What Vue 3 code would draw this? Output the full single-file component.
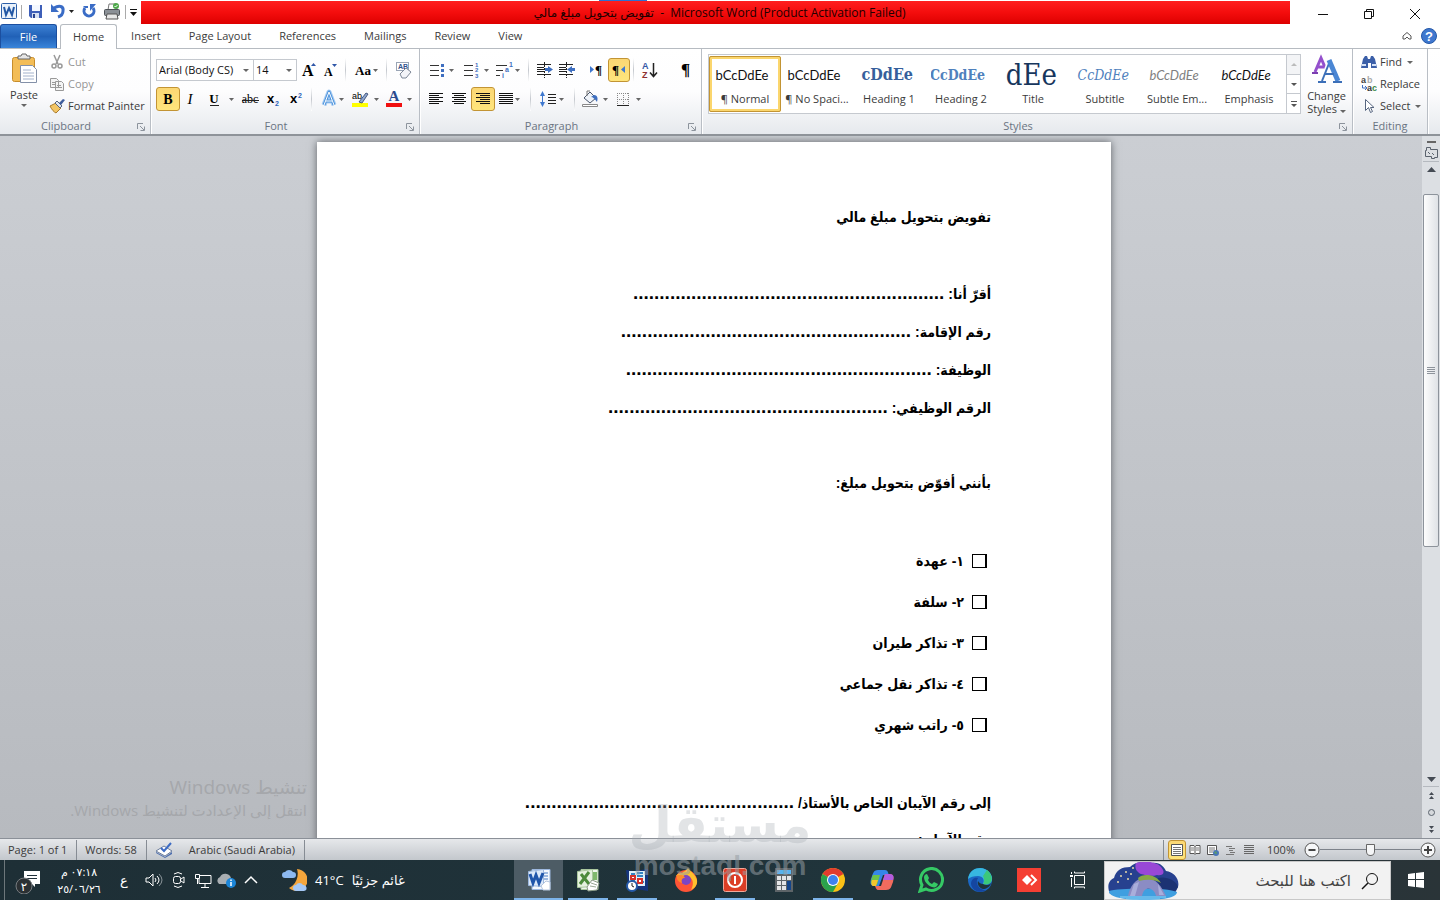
<template>
  <div class="app">
    <!-- Title bar -->
    <header class="titlebar">
      <div class="quick">
        <svg width="20" height="24" viewBox="0 0 20 24">
          <rect x="1.5" y="3.5" width="15" height="15" rx="1" fill="#eaf2fb" stroke="#2c5fa8" />
          <path d="M4 7l2 8 3-7 3 7 2-8" fill="none" stroke="#2358a5" stroke-width="2" />
        </svg>
        <i class="bar"></i>
        <button aria-label="Save">
          <svg width="24" height="24" viewBox="0 0 24 24">
            <path d="M6 5h13v13H8l-2-2z" fill="#3e5fb8" />
            <path d="M9 5h8v6H9z" fill="#f4f8ff" />
            <path d="M9 13h7v5H9z" fill="#d5dff2" />
            <path d="M10 14h2v4h-2z" fill="#27408c" />
          </svg>
        </button>
        <button aria-label="Undo">
          <svg width="30" height="24" viewBox="0 0 30 24">
            <path d="M7 8c5-3 10-2 9 3 0 3-2 5-5 6" fill="none" stroke="#3a6cc6" stroke-width="3" />
            <path d="M4 4v8h8z" fill="#3a6cc6" />
            <path d="M22 10h5l-2.5 3z" fill="#222" />
          </svg>
        </button>
        <button aria-label="Redo">
          <svg width="24" height="24" viewBox="0 0 24 24">
            <path d="M8 8a5 5 0 1 0 8 0" fill="none" stroke="#3a6cc6" stroke-width="3" />
            <path d="M13 4h6l-6 7z" fill="#3a6cc6" />
            <path d="M6 6h5v2H8z" fill="#3a6cc6" />
          </svg>
        </button>
        <button aria-label="Quick print">
          <svg width="23" height="24" viewBox="0 0 23 24">
            <path d="M7 10l1-6h7l1 6z" fill="#fff" stroke="#777" />
            <rect x="3.5" y="9.5" width="15" height="6" rx="1" fill="#8b9096" stroke="#4d5257" />
            <path d="M6 14h10l1 5H5z" fill="#e8e8e8" stroke="#555" />
            <circle cx="15" cy="6" r="3" fill="#4ea84a" />
            <path d="M13.5 6l1 1 2-2" stroke="#fff" fill="none" />
          </svg>
        </button>
        <i class="bar"></i>
        <button aria-label="Customize">
          <svg width="13" height="24" viewBox="0 0 13 24"><path d="M3 9h7v1H3zM3 12h7l-3.500 4z" fill="#111" /></svg>
        </button>
      </div>
      <div class="caption">تفويض بتحويل مبلغ مالي&nbsp; -&nbsp; Microsoft Word (Product Activation Failed)</div>
      <div class="window-buttons">
        <button aria-label="Minimize"><svg width="12" height="12" viewBox="0 0 12 12"><path d="M1 6.500h10" stroke="#111" /></svg></button>
        <button aria-label="Restore">
          <svg width="12" height="12" viewBox="0 0 12 12" fill="none" stroke="#111"><path d="M1.500 3.500h7v7h-7zM3.500 3.500v-2h7v7h-2" /></svg>
        </button>
        <button aria-label="Close"><svg width="12" height="12" viewBox="0 0 12 12"><path d="M1 1l10 10M11 1L1 11" stroke="#111" /></svg></button>
      </div>
    </header>

    <!-- Tabs -->
    <nav class="tabs">
      <button class="file">File</button>
      <button v-for="tab in tabs" :key="tab" class="tab" :class="{ active: tab === activeTab }" @click="activeTab = tab">{{ tab }}</button>
      <div class="tabs-end">
        <button aria-label="Minimize the ribbon">
          <svg width="12" height="16" viewBox="0 0 12 16"><path d="M2 8l4-3.500L10 8v3H8L6 9l-2 2H2z" fill="#fff" stroke="#555" /></svg>
        </button>
        <button aria-label="Help">
          <svg width="18" height="18" viewBox="0 0 18 18">
            <circle cx="9" cy="9" r="7.500" fill="#3f78cf" stroke="#2458a8" />
            <text x="9" y="14" text-anchor="middle" class="sans-bold" font-size="13" fill="#fff">?</text>
          </svg>
        </button>
      </div>
    </nav>

    <!-- Ribbon -->
    <section class="ribbon">
      <div class="group clipboard">
        <div class="group-body">
          <button class="paste">
            <svg width="32" height="32" viewBox="0 0 32 32">
              <rect x="4.500" y="4.500" width="22" height="24" rx="2" fill="#f3bd57" stroke="#c78d2c" />
              <path d="M10 6V3h3l1-2h4l1 2h3v3z" fill="#e6e6e6" stroke="#666" />
              <path d="M12.500 12.500h12l4 4v13h-16z" fill="#fff" stroke="#8390a8" />
              <path d="M15 17h8M15 20h11M15 23h11M15 26h11" stroke="#a3b2cc" />
            </svg>
            <span>Paste</span>
            <i class="caret"></i>
          </button>
          <div class="stack">
            <button class="line dim">
              <svg width="16" height="16" viewBox="0 0 16 16" fill="none" stroke="#999" stroke-width="1.500">
                <path d="M5 1l4 9M11 1L7 10" /><circle cx="5" cy="12" r="2" /><circle cx="11" cy="12" r="2" />
              </svg>
              Cut
            </button>
            <button class="line dim">
              <svg width="16" height="16" viewBox="0 0 16 16" fill="#f4f4f4" stroke="#999">
                <path d="M1.500 2.500h6l2 2v7h-8zM6.500 5.500h6l2 2v7h-8z" /><path d="M8 9.500h4M8 11.500h5M3 6.500h3M3 8.500h3" />
              </svg>
              Copy
            </button>
            <button class="line">
              <svg width="16" height="16" viewBox="0 0 16 16">
                <path d="M1 8l6-3 5 5-5 5c-2-1-4-3-6-7z" fill="#f2c565" stroke="#a97a2a" />
                <path d="M6 5l2-2 5 5-2 2z" fill="#dfe6f0" stroke="#56657f" />
                <path d="M10 5l4-4 2 1-4 5z" fill="#3e5d9c" />
              </svg>
              Format Painter
            </button>
          </div>
        </div>
        <div class="group-label"><span>Clipboard</span><Launcher /></div>
      </div>

      <div class="group font">
        <div class="group-body rows">
          <div class="row">
            <div class="combo family">
              <select aria-label="Font"><option>Arial (Body CS)</option></select><i class="caret"></i>
            </div>
            <div class="combo size">
              <select aria-label="Font size"><option>14</option></select><i class="caret"></i>
            </div>
            <button aria-label="Grow font">
              <svg width="24" height="24" viewBox="0 0 24 24">
                <text x="5" y="18" class="serif" font-size="16">A</text><path d="M14 8l2.500-3L19 8z" fill="#2f57a8" />
              </svg>
            </button>
            <button aria-label="Shrink font">
              <svg width="21" height="24" viewBox="0 0 21 24">
                <text x="3" y="18" class="serif" font-size="12">A</text><path d="M11 6h5l-2.500 3z" fill="#2f57a8" />
              </svg>
            </button>
            <i class="sep"></i>
            <button aria-label="Change case">
              <svg width="33" height="24" viewBox="0 0 33 24"><text x="5" y="17" class="serif" font-size="13">Aa</text><path d="M23 11h5l-2.500 3z" fill="#666" /></svg>
            </button>
            <i class="sep"></i>
            <button aria-label="Clear formatting">
              <svg width="25" height="24" viewBox="0 0 25 24">
                <rect x="5.500" y="4.500" width="12" height="8" fill="#fff" stroke="#9aa5b5" />
                <text x="7" y="11" class="sans-bold" font-size="7" fill="#33518c">AB</text>
                <path d="M9 16l6-6 5 4-5 6h-4z" fill="#f3f4f8" stroke="#7d8797" />
              </svg>
            </button>
          </div>
          <div class="row">
            <button class="on" aria-label="Bold"><svg width="22" height="22" viewBox="0 0 22 22"><text x="11" y="16" text-anchor="middle" class="serif" font-size="14">B</text></svg></button>
            <button aria-label="Italic"><svg width="22" height="24" viewBox="0 0 22 24"><text x="10" y="17" text-anchor="middle" class="serif-plain italic" font-size="15">I</text></svg></button>
            <button aria-label="Underline">
              <svg width="36" height="24" viewBox="0 0 36 24">
                <text x="12" y="16" text-anchor="middle" class="serif" font-size="13">U</text><path d="M8 18.500h9" stroke="#222" /><path d="M27 11h5l-2.500 3z" fill="#666" />
              </svg>
            </button>
            <button aria-label="Strikethrough">
              <svg width="24" height="24" viewBox="0 0 24 24"><text x="12" y="16" text-anchor="middle" class="serif-plain" font-size="12">abc</text><path d="M4 13.500h17" stroke="#222" /></svg>
            </button>
            <button aria-label="Subscript">
              <svg width="24" height="24" viewBox="0 0 24 24"><text x="5" y="16" class="sans-bold" font-size="13">x</text><text x="13" y="19" class="sans-bold" font-size="7" fill="#2c62b8">2</text></svg>
            </button>
            <button aria-label="Superscript">
              <svg width="22" height="24" viewBox="0 0 22 24"><text x="4" y="16" class="sans-bold" font-size="13">x</text><text x="12" y="11" class="sans-bold" font-size="7" fill="#2c62b8">2</text></svg>
            </button>
            <i class="sep"></i>
            <button aria-label="Text effects">
              <svg width="32" height="24" viewBox="0 0 32 24">
                <g fill="none" stroke-linejoin="round">
                  <path d="M8 18l5-13 5 13M10 14h6" stroke="#a9cdf3" stroke-width="5" />
                  <path d="M8 18l5-13 5 13M10 14h6" stroke="#4f94dc" stroke-width="3" />
                  <path d="M8 18l5-13 5 13M10 14h6" stroke="#fff" />
                </g>
                <path d="M23 11h5l-2.500 3z" fill="#666" />
              </svg>
            </button>
            <button aria-label="Highlight">
              <svg width="34" height="24" viewBox="0 0 34 24">
                <path d="M4 16h16v4H4z" fill="#ff0" /><text x="4" y="12" class="sans" font-size="9">ab</text>
                <path d="M11 15l7-9 2 1-6 9z" fill="#8fa6d0" stroke="#465a80" /><path d="M26 11h5l-2.500 3z" fill="#666" />
              </svg>
            </button>
            <button aria-label="Font color">
              <svg width="34" height="24" viewBox="0 0 34 24">
                <path d="M4 16h16v4H4z" fill="#f01010" /><text x="12" y="14" text-anchor="middle" class="serif" font-size="15" fill="#2a4a8e">A</text>
                <path d="M25 11h5l-2.500 3z" fill="#666" />
              </svg>
            </button>
          </div>
        </div>
        <div class="group-label"><span>Font</span><Launcher /></div>
      </div>

      <div class="group paragraph">
        <div class="group-body rows">
          <div class="row">
            <button aria-label="Bullets">
              <svg width="34" height="24" viewBox="0 0 34 24">
                <path d="M5 7.500h9M5 12.500h9M5 17.500h9" stroke="#333" /><path d="M16 6h3v3h-3zM16 11h3v3h-3zM16 16h3v3h-3z" fill="#3f6fc0" /><path d="M24 11h5l-2.500 3z" fill="#666" />
              </svg>
            </button>
            <button aria-label="Numbering">
              <svg width="34" height="24" viewBox="0 0 34 24">
                <path d="M5 7.500h9M5 12.500h9M5 17.500h9" stroke="#333" />
                <g class="sans-bold" font-size="6" fill="#3f6fc0"><text x="16" y="9">1</text><text x="16" y="14">2</text><text x="16" y="20">3</text></g>
                <path d="M25 11h5l-2.500 3z" fill="#666" />
              </svg>
            </button>
            <button aria-label="Multilevel list">
              <svg width="32" height="24" viewBox="0 0 32 24">
                <path d="M3 7.500h11M3 12.500h7M3 17.500h4" stroke="#333" />
                <g class="sans-bold" font-size="7" fill="#3f6fc0"><text x="16" y="9">1</text><text x="12" y="14">a</text><text x="9" y="20">i</text></g>
                <path d="M22 11h5l-2.500 3z" fill="#666" />
              </svg>
            </button>
            <i class="sep"></i>
            <button v-for="dir in ['Decrease indent', 'Increase indent']" :key="dir" :aria-label="dir">
              <svg width="22" height="24" viewBox="0 0 22 24">
                <path d="M4 6.500h14M4 9.500h7M4 11.500h7M4 13.500h7M4 16.500h14" stroke="#222" />
                <path d="M11.500 4v16" stroke="#222" stroke-dasharray="2 1" />
                <path v-if="dir === 'Decrease indent'" d="M12 10h3V8l5 3.500-5 3.500v-2h-3z" fill="#3f6fc0" />
                <path v-else d="M20 10h-3V8l-5 3.500 5 3.500v-2h3z" fill="#3f6fc0" />
              </svg>
            </button>
            <i class="sep"></i>
            <button aria-label="Left to right">
              <svg width="24" height="24" viewBox="0 0 24 24"><path d="M6 8v7l4-3.500z" fill="#3f78cf" /><text x="11" y="16" class="serif" font-size="13">¶</text></svg>
            </button>
            <button class="on" aria-label="Right to left">
              <svg width="20" height="22" viewBox="0 0 20 22"><text x="3" y="15" class="serif" font-size="13">¶</text><path d="M16 7v7l-4-3.500z" fill="#3f78cf" /></svg>
            </button>
            <i class="sep"></i>
            <button aria-label="Sort">
              <svg width="24" height="24" viewBox="0 0 24 24">
                <text x="4" y="11" class="sans-bold" font-size="9" fill="#3457a5">A</text><text x="4" y="20" class="sans-bold" font-size="9" fill="#8e3030">Z</text>
                <path d="M15.500 5v13M12 14.500l3.500 4 3.500-4" fill="none" stroke="#222" stroke-width="1.500" />
              </svg>
            </button>
            <i class="sep"></i>
            <button aria-label="Show marks"><svg width="32" height="24" viewBox="0 0 32 24"><text x="12" y="17" class="serif" font-size="17">¶</text></svg></button>
          </div>
          <div class="row">
            <button v-for="a in alignments" :key="a.name" :class="{ on: a.on }" :aria-label="a.name">
              <svg :width="a.width" height="22" :viewBox="`0 0 ${a.width} 22`">
                <path :d="a.d" stroke="#111" /><path v-if="a.menu" d="M20 10h5l-2.500 3z" fill="#666" />
              </svg>
            </button>
            <i class="sep"></i>
            <button aria-label="Line spacing">
              <svg width="36" height="24" viewBox="0 0 36 24">
                <path d="M7.500 7v10" stroke="#3f78cf" /><path d="M5 9l2.500-5L10 9zM5 15l2.500 5 2.500-5z" fill="#3f78cf" />
                <path d="M13 7.500h8M13 10.500h8M13 13.500h8M13 16.500h8" stroke="#222" /><path d="M24 11h5l-2.500 3z" fill="#666" />
              </svg>
            </button>
            <i class="sep"></i>
            <button aria-label="Shading">
              <svg width="36" height="24" viewBox="0 0 36 24">
                <path d="M5 11l6-6 6 6-6 5z" fill="#eef2f8" stroke="#49556b" /><path d="M15 8c4 0 4 4 3 7-2-3-4-5-6-5z" fill="#3f6fc0" />
                <path d="M8 9V4h3" fill="none" stroke="#777" /><path d="M3.500 17.500h15v2h-15z" fill="#fff" stroke="#888" /><path d="M24 11h5l-2.500 3z" fill="#666" />
              </svg>
            </button>
            <button aria-label="Borders">
              <svg width="32" height="24" viewBox="0 0 32 24">
                <path d="M2 6.500h12M2 12.500h12M2.500 6v12M8.500 6v12M13.500 6v12" stroke="#888" stroke-dasharray="1 1" /><path d="M2 18.500h12" stroke="#222" />
                <path d="M21 11h5l-2.500 3z" fill="#666" />
              </svg>
            </button>
          </div>
        </div>
        <div class="group-label"><span>Paragraph</span><Launcher /></div>
      </div>

      <div class="group styles">
        <div class="group-body">
          <div class="gallery">
            <button v-for="s in styles" :key="s.name" class="style" :class="{ selected: s.selected }">
              <span class="preview" :class="s.look"><span>{{ s.sample }}</span></span>
              <span class="style-name">{{ s.name }}</span>
            </button>
            <div class="gallery-scroll">
              <button aria-label="Row up" class="off"><svg width="12" height="8" viewBox="0 0 12 8"><path d="M3 6h6L6 3z" fill="#bbb" /></svg></button>
              <button aria-label="Row down"><svg width="12" height="8" viewBox="0 0 12 8"><path d="M3 3h6L6 6z" fill="#555" /></svg></button>
              <button aria-label="More"><svg width="12" height="8" viewBox="0 0 12 8"><path d="M3 1h6v1H3zM3 4h6L6 7z" fill="#555" /></svg></button>
            </div>
          </div>
          <button class="change">
            <svg width="32" height="30" viewBox="0 0 32 30">
              <g fill="none">
                <path d="M4 18l6-14 6 14M6 13h8" stroke="#9450cc" stroke-width="3" />
                <path d="M1 19h6" stroke="#7a3db0" stroke-width="2" />
                <path d="M11 27l8-20 8 20M14 20h10" stroke="#fff" stroke-width="5" />
                <path d="M11 27l8-20" stroke="#3c6fb8" stroke-width="2" />
                <path d="M18 6l9 21" stroke="#4a86d4" stroke-width="5" />
                <path d="M14 20h9M7 28h8M22 28h9" stroke="#3c6fb8" stroke-width="2" />
              </g>
            </svg>
            <span>Change</span>
            <span>Styles <i class="caret"></i></span>
          </button>
        </div>
        <div class="group-label"><span>Styles</span><Launcher /></div>
      </div>

      <div class="group editing">
        <div class="group-body">
          <div class="stack">
            <button class="line">
              <svg width="16" height="16" viewBox="0 0 16 16">
                <path d="M2 5l2-3h2l1 3h2l1-3h2l2 3 2 9h-6V9H7v5H0z" fill="#3b5fa8" /><path d="M1 11h4M11 11h4" stroke="#d7e2f5" stroke-width="2" />
              </svg>
              Find <i class="caret"></i>
            </button>
            <button class="line">
              <svg width="16" height="16" viewBox="0 0 16 16">
                <text x="0" y="7" class="sans-bold" font-size="9" fill="#444">a</text><text x="6" y="7" class="sans-bold" font-size="9" fill="#aaa">b</text>
                <text x="6" y="15" class="sans-bold" font-size="9" fill="#333">a</text><text x="11" y="15" class="sans-bold" font-size="9" fill="#3b8a4a">c</text>
                <path d="M1.500 9v3H5M4 10l2 2-2 2" fill="none" stroke="#3f6fc0" />
              </svg>
              Replace
            </button>
            <button class="line">
              <svg width="16" height="16" viewBox="0 0 16 16"><path d="M4.500 1.500v11l3-3 2 5 2-1-2-4h3.500z" fill="#fff" stroke="#56657f" /></svg>
              Select <i class="caret"></i>
            </button>
          </div>
        </div>
        <div class="group-label"><span>Editing</span></div>
      </div>
    </section>

    <!-- Document -->
    <main class="workspace">
      <div class="canvas">
        <article class="page" dir="rtl">
          <h1>تفويض بتحويل مبلغ مالي</h1>
          <p></p>
          <p v-for="f in fields" :key="f.label">{{ f.label }} <span class="dots">{{ '.'.repeat(f.dots) }}</span></p>
          <p></p>
          <p>بأنني أفوّض بتحويل مبلغ:</p>
          <p></p>
          <label v-for="o in options" :key="o" class="option"><input type="checkbox" />{{ o }}</label>
          <p></p>
          <p>إلى رقم الآيبان الخاص بالأستاذ/ <span class="dots">{{ '.'.repeat(51) }}</span></p>
          <p>رقم الآيبان:</p>
        </article>
        <div class="activation" dir="rtl">
          <strong>تنشيط Windows</strong>
          <span>انتقل إلى الإعدادت لتنشيط Windows.</span>
        </div>
      </div>
      <div class="scrollbar">
        <button aria-label="Split"><svg width="16" height="6" viewBox="0 0 16 6"><path d="M4 2h9v2H4z" fill="#666" /></svg></button>
        <button aria-label="Ruler" class="ruler">
          <svg width="16" height="16" viewBox="0 0 16 16" fill="none" stroke="#5b636e"><path d="M3.500 2.500h4v2h7v8h-3v1h-3v-2h-6v-6h1zM5 7l2 2M9 8l2 2" /></svg>
        </button>
        <button aria-label="Scroll up"><svg width="16" height="14" viewBox="0 0 16 14"><path d="M4 10h9L8.500 5z" fill="#454b54" /></svg></button>
        <div class="track">
          <div class="thumb"><i></i><i></i><i></i><i></i></div>
        </div>
        <button aria-label="Scroll down" class="down"><svg width="16" height="14" viewBox="0 0 16 14"><path d="M4 5h9l-4.500 5z" fill="#454b54" /></svg></button>
        <button aria-label="Previous page"><svg width="16" height="17" viewBox="0 0 16 17"><path d="M6 8h5L8.500 5zM6 12h5L8.500 9z" fill="#454b54" /></svg></button>
        <button aria-label="Browse object"><svg width="16" height="17" viewBox="0 0 16 17"><circle cx="8.500" cy="8.500" r="3" fill="#d5d8dc" stroke="#5b636e" /></svg></button>
        <button aria-label="Next page"><svg width="16" height="17" viewBox="0 0 16 17"><path d="M6 5h5L8.500 8zM6 9h5l-2.500 3z" fill="#454b54" /></svg></button>
      </div>
    </main>

    <!-- Status bar -->
    <footer class="status">
      <button class="cell">Page: 1 of 1</button>
      <button class="cell">Words: 58</button>
      <button class="cell lang">
        <svg width="18" height="16" viewBox="0 0 18 16">
          <path d="M1 9l8-5 8 5-7 5z" fill="#fff" stroke="#6d7f9e" /><path d="M1 10l9 5 7-5v2l-7 4-9-5z" fill="#4a6cae" /><path d="M6 6l3 3 7-8" fill="none" stroke="#3c6bc4" stroke-width="2" />
        </svg>
        Arabic (Saudi Arabia)
      </button>
      <div class="views">
        <button class="on" aria-label="Print layout">
          <svg width="16" height="16" viewBox="0 0 16 16"><path d="M2.500 2.500h11v11h-11z" fill="#fff" stroke="#555" /><path d="M4 5.500h8M4 7.500h8M4 9.500h8M4 11.500h8" stroke="#777" /></svg>
        </button>
        <button aria-label="Full screen reading">
          <svg width="16" height="16" viewBox="0 0 16 16"><path d="M3 3.500h4l1 1 1-1h4v8H9l-1 1-1-1H3zM8 4v8" fill="#fff" stroke="#555" /><path d="M4 6h3M4 8h3M9 6h3M9 8h3" stroke="#777" /></svg>
        </button>
        <button aria-label="Web layout">
          <svg width="16" height="16" viewBox="0 0 16 16"><path d="M2.500 3.500h9v9h-9z" fill="#fff" stroke="#555" /><path d="M4 6h6M4 8h6M4 10h4" stroke="#777" /><circle cx="11" cy="11" r="3" fill="#4a76b8" /><path d="M9 11l2-2 1 3z" fill="#5da35a" /></svg>
        </button>
        <button aria-label="Outline">
          <svg width="16" height="16" viewBox="0 0 16 16"><path d="M3 4.500h6M6 6.500h6M6 8.500h4M7 10.500h5M3 12.500h8" stroke="#777" /></svg>
        </button>
        <button aria-label="Draft">
          <svg width="16" height="16" viewBox="0 0 16 16"><path d="M3 3.500h10M3 5.500h10M3 7.500h10M3 9.500h10M3 11.500h10" stroke="#666" /></svg>
        </button>
      </div>
      <button class="percent">100%</button>
      <div class="zoom">
        <button aria-label="Zoom out"><svg width="16" height="16" viewBox="0 0 16 16"><circle cx="8" cy="8" r="7" fill="#f6f7f8" stroke="#555" /><path d="M4.500 8h7" stroke="#444" stroke-width="2" /></svg></button>
        <input v-model="zoom" type="range" min="0" max="200" aria-label="Zoom" />
        <button aria-label="Zoom in"><svg width="16" height="16" viewBox="0 0 16 16"><circle cx="8" cy="8" r="7" fill="#f6f7f8" stroke="#555" /><path d="M4 8h8M8 4v8" stroke="#444" stroke-width="2" /></svg></button>
      </div>
    </footer>

    <!-- Taskbar -->
    <footer class="taskbar">
      <div class="tray">
        <button class="notify" aria-label="Notifications">
          <svg width="28" height="28" viewBox="0 0 28 28">
            <path d="M10 5h16v13h-5v3l-3-3h-8z" fill="#fff" /><path d="M13 9.500h10M13 12.500h10" stroke="#20303a" />
            <circle cx="10" cy="20" r="8" fill="#2b3033" stroke="#777c80" /><text x="10" y="25" text-anchor="middle" class="arabic" font-size="12" fill="#fff">٢</text>
          </svg>
        </button>
        <div class="clock" dir="rtl"><span>٠٧:١٨ م</span><span dir="ltr">٢٥/٠٦/٢٦</span></div>
        <button class="ime">ع</button>
        <button aria-label="Volume">
          <svg width="25" height="20" viewBox="0 0 25 20" fill="none" stroke="#fff"><path d="M5 8h3l4-4v12l-4-4H5zM14 8q2 2 0 4M16 6q4 4 0 8" /><path d="M18 4q6 6 0 12" stroke="#8a9499" /></svg>
        </button>
        <button aria-label="Meet now">
          <svg width="25" height="20" viewBox="0 0 25 20" fill="none" stroke="#fff"><rect x="7.500" y="6.500" width="7" height="7" rx="2" /><path d="M15 9l3-2v6l-3-2M8 4q4-3 8 0M8 16q4 3 8 0" /></svg>
        </button>
        <button aria-label="Network">
          <svg width="24" height="20" viewBox="0 0 24 20" fill="none" stroke="#fff"><path d="M9 5.500h11v8H8V9M14 14v3M10 17.500h8M4.500 4.500h4v4h-4zM6.500 9v5" /></svg>
        </button>
        <button aria-label="OneDrive">
          <svg width="24" height="20" viewBox="0 0 24 20">
            <path d="M4 14a4 4 0 0 1 1-7 6 6 0 0 1 11 1 4 4 0 0 1 1 6z" fill="#a9aeb2" /><circle cx="16" cy="13" r="5" fill="#1c86d8" /><path d="M16 12v4M16 9.500v1.500" stroke="#fff" stroke-width="1.500" />
          </svg>
        </button>
        <button aria-label="Hidden icons"><svg width="24" height="20" viewBox="0 0 24 20"><path d="M6 13l6-6 6 6" fill="none" stroke="#fff" stroke-width="1.500" /></svg></button>
        <button class="weather">
          <svg width="26" height="26" viewBox="0 0 26 26">
            <path d="M16 2A11 11 0 1 1 8 21A16 16 0 0 0 16 2z" fill="#f5a63c" />
            <path d="M4 11a3 3 0 0 1 0-6 5 5 0 0 1 8 0 3 3 0 0 1 0 6z" fill="#8db9f0" />
            <path d="M15 24a3 3 0 0 1 0-6 4 4 0 0 1 7 0 3 3 0 0 1 1 6z" fill="#a5c8f5" />
          </svg>
          <span>41°C</span><span dir="rtl">غائم جزئيًا</span>
        </button>
      </div>

      <div class="apps">
        <button v-for="app in apps" :key="app.name" class="app-btn" :class="{ open: app.open, current: app.current }" :aria-label="app.name">
          <svg width="26" height="26" viewBox="0 0 26 26">
            <template v-if="app.name === 'Word'">
              <path d="M6 2.500h18v20H6z" fill="#f4f8fd" stroke="#9db8df" /><path d="M17 6h5M17 9h5M17 12h5" stroke="#4b7cc4" />
              <path d="M2.500 4.500l15-2v17l-15-1z" fill="#dbe8f9" stroke="#9db8df" /><path d="M4 7l3 9 3-8 3 8 4-10" fill="none" stroke="#1f55aa" stroke-width="3" /><path d="M15 19l5-5 4 1v8h-7z" fill="#fff" stroke="#b5c5dc" />
            </template>
            <template v-else-if="app.name === 'Excel'">
              <path d="M6 2.500h17v20H6z" fill="#eff6ec" stroke="#a9c79d" /><path d="M16 5h6v8h-6z" fill="#7fb86c" /><path d="M2.500 4.500l15-2v17l-15 1z" fill="#e5f1df" stroke="#a9c79d" />
              <path d="M6 7l8 10M14 5L5 17" stroke="#4c8b3b" stroke-width="3" /><path d="M12 20l5-7 7 3-2 7-9 1z" fill="#fff" stroke="#8a9a86" /><path d="M15 19l6 1M16 16l6 2" stroke="#9aa896" />
            </template>
            <template v-else-if="app.name === 'Attendance'">
              <path d="M2 3l8 1 14-2v22l-12-2-8-4z" fill="#15357e" /><path d="M5 4h16v15H5z" fill="#dff1fc" />
              <path d="M7 7h4M13 6h6M13 9h6M7 14h4M16 15h4" stroke="#3484c4" stroke-width="2" /><path d="M7 9h4v3H7zM14 12h4v4h-4z" fill="#fff" stroke="#d7322b" stroke-width="2" />
              <circle cx="8" cy="19" r="5" fill="#fff" stroke="#2559a8" stroke-width="2" /><path d="M8 16v3l2 1" stroke="#222" fill="none" />
            </template>
            <template v-else-if="app.name === 'Firefox'">
              <circle cx="13" cy="14" r="11" fill="#ff5436" /><path d="M3 9c2-3 4-3 6-3 2-2 4-2 6-5 2 3 8 7 9 12 1 6-4 9-6 10 4-8 1-12-3-14z" fill="#ffc02e" />
              <circle cx="13" cy="13" r="5" fill="#7d45c4" /><path d="M4 8c4-1 7 0 8 3-3 0-4 2-3 5-4-1-6-4-5-8z" fill="#ff8a2b" />
            </template>
            <template v-else-if="app.name === 'Shutdown'">
              <rect x="1.500" y="1.500" width="23" height="23" rx="2" fill="#dc3e26" stroke="#f2a99b" /><circle cx="13" cy="13" r="7" fill="none" stroke="#fff" stroke-width="2" /><path d="M13 9v8" stroke="#fff" stroke-width="2" />
            </template>
            <template v-else-if="app.name === 'Calculator'">
              <path d="M4 1h18v24H4z" fill="#5d6468" /><path d="M6 3h14v4H6z" fill="#58b3ee" />
              <path d="M6 9h4v4H6zM11 9h4v4h-4zM16 9h4v4h-4zM6 14h4v4H6zM11 14h4v4h-4zM6 19h4v4H6zM11 19h4v4h-4z" fill="#e3e5e7" /><path d="M16 14h4v9h-4z" fill="#14458a" />
            </template>
            <template v-else-if="app.name === 'Chrome'">
              <circle cx="13" cy="13" r="12" fill="#fbc116" /><path d="M13 13L2.600 7A12 12 0 0 1 23.400 7z" fill="#e33b2e" /><path d="M13 13L2.600 7A12 12 0 0 0 13 25l5-9z" fill="#2ba24c" />
              <circle cx="13" cy="13" r="6" fill="#fff" /><circle cx="13" cy="13" r="5" fill="#3f82ee" />
            </template>
            <template v-else-if="app.name === 'Copilot'">
              <path d="M9 3h7c3 0 3 3 4 5h-6l-4 11H5c-4 0-4-4-3-7 2-5 2-9 7-9z" fill="#3486e8" /><path d="M4 8h7l-3 10H4c-3-1-2-6 0-10z" fill="#6cc24a" /><path d="M3 13h6l-2 6H4c-2 0-2-4-1-6z" fill="#f4c62e" />
              <path d="M17 23h-7c-3 0-3-2-4-4h6l4-12h5c4 0 4 4 3 8-2 5-2 8-7 8z" fill="#f26b5e" /><path d="M16 7h5c4 0 4 4 3 6h-10z" fill="#b25ce0" />
            </template>
            <template v-else-if="app.name === 'WhatsApp'">
              <path d="M2 24l2-6a11 11 0 1 1 4 4z" fill="none" stroke="#35c965" stroke-width="3" />
              <path d="M9 7l2 4-1 2c1 2 2 3 4 4l2-2 4 2c-1 3-3 4-6 3-5-2-8-6-8-10 0-2 2-3 3-3z" fill="#35c965" />
            </template>
            <template v-else-if="app.name === 'Edge'">
              <circle cx="13" cy="13" r="12" fill="#1b68c4" /><path d="M1 12C2 4 8 1 13 1c8 0 13 7 12 12-1 4-6 5-9 4 2-4 0-8-5-8-4 0-8 1-10 3z" fill="#37b8e0" />
              <path d="M20 3c4 3 6 9 4 12-2 3-6 3-8 2 2-3 1-6 0-8z" fill="#3cc77a" /><path d="M11 11c-3 4 0 12 8 12-6 4-14 1-15-6 0-4 3-7 7-6z" fill="#1546a0" /><path d="M16 17c3 2 7 1 8-1-1 4-5 6-8 6-4-1-6-5-5-8 1 2 3 3 5 3z" fill="#20323a" />
            </template>
            <template v-else-if="app.name === 'AnyDesk'">
              <path d="M1 1h24v24H1z" fill="#f43f33" /><path d="M11 8l5 5-5 5-5-5z" fill="#fff" /><path d="M15 8l5 5-5 5" fill="none" stroke="#fff" stroke-width="2" />
            </template>
            <g v-else fill="none" stroke="#fff"><path d="M9.500 8.500h10v9h-10zM6.500 5v2M6.500 11v9M9.500 4.500V6h10V4.500M9.500 21.500V20h10v1.500" /><path d="M5 9h3" stroke-width="2" /></g>
          </svg>
        </button>
        <div class="search" dir="rtl">
          <svg width="18" height="18" viewBox="0 0 18 18" fill="none" stroke="#111"><circle cx="11" cy="7" r="5.500" /><path d="M7 11l-6 6" stroke-width="1.500" /></svg>
          <input aria-label="اكتب هنا للبحث" placeholder="اكتب هنا للبحث" />
          <svg width="74" height="38" viewBox="0 0 74 38">
            <path d="M4 32C0 22 4 18 8 16 10 8 16 5 24 5c6-6 16-6 22-4 8-1 12 4 14 8 8 1 14 8 12 16l-4 8z" fill="#27418f" />
            <path d="M30 1c10-3 24-1 27 7 2 4-2 6-6 5-6 2-12 0-16-1-4-2-7-6-5-11z" fill="#9848d6" />
            <path d="M52 16c8-2 18 2 20 9l-6 9H54z" fill="#1c3273" />
            <path d="M3 29c8-3 58-4 68 1 0 6-16 8-34 8S2 35 3 29z" fill="#3f9fe0" />
            <path d="M14 35h46M20 37h34" stroke="#8ed4f6" />
            <path d="M22 34c2-10 8-19 18-18 10 0 16 9 20 18H50c-2-9-12-11-14 0z" fill="#8b8cc4" />
            <path d="M32 16c5-5 18-4 23 5-7-4-14-4-22-2z" fill="#86a845" />
            <path d="M24 34l4-12 5-2-4 14zM52 22l6 11h-5z" fill="#a9aedb" />
            <g fill="#e8d9a8"><circle cx="15" cy="14" r="1" /><circle cx="20" cy="10" r="1" /><circle cx="25" cy="12" r="1" /><circle cx="12" cy="20" r="1" /><circle cx="22" cy="17" r="1" /><circle cx="27" cy="6" r="1" /></g>
          </svg>
        </div>
        <button class="start" aria-label="Start">
          <svg width="18" height="18" viewBox="0 0 18 18"><path d="M1 3l7-1v6H1zM9 2l8-1v7H9zM1 9h7v7l-7-1zM9 9h8v8l-8-1z" fill="#fff" /></svg>
        </button>
      </div>
    </footer>

    <div class="brand"><span class="brand-ar">مستقل</span><span class="brand-en">mostaql.com</span></div>
  </div>
</template>

<script setup>
import { ref, h } from 'vue'

// State
const activeTab = ref('Home')
const zoom = ref(100)

const tabs = ['Home', 'Insert', 'Page Layout', 'References', 'Mailings', 'Review', 'View']

const Launcher = () =>
  h('button', { 'aria-label': 'More options', class: 'launcher' }, [
    h('svg', { width: 8, height: 8, viewBox: '0 0 8 8', fill: 'none', stroke: '#8c939c' }, [
      h('path', { d: 'M0.5 6V0.5H6M3 3l4 4M7.500 3.500v4h-4' }),
    ]),
  ])

const alignments = [
  { name: 'Align left', width: 23, d: 'M4 5.500h14M4 7.500h10M4 9.500h14M4 11.500h10M4 13.500h14M4 15.500h10' },
  { name: 'Center', width: 23, d: 'M4 5.500h14M6 7.500h10M4 9.500h14M6 11.500h10M4 13.500h14M6 15.500h10' },
  { name: 'Align right', width: 22, on: true, d: 'M4 5.500h14M8 7.500h10M4 9.500h14M8 11.500h10M4 13.500h14M8 15.500h10' },
  { name: 'Justify', width: 32, menu: true, d: 'M4 5.500h14M4 7.500h14M4 9.500h14M4 11.500h14M4 13.500h14M4 15.500h14' },
]

const styles = [
  { name: '¶ Normal', sample: 'bCcDdEe', look: 'body', selected: true },
  { name: '¶ No Spaci...', sample: 'bCcDdEe', look: 'body' },
  { name: 'Heading 1', sample: 'cDdEe', look: 'heading1' },
  { name: 'Heading 2', sample: 'CcDdEe', look: 'heading2' },
  { name: 'Title', sample: 'dEe', look: 'title' },
  { name: 'Subtitle', sample: 'CcDdEe', look: 'subtitle' },
  { name: 'Subtle Em...', sample: 'bCcDdEe', look: 'body subtle' },
  { name: 'Emphasis', sample: 'bCcDdEe', look: 'body emphasis' },
]

const fields = [
  { label: 'أقرّ أنا:', dots: 59 },
  { label: 'رقم الإقامة:', dots: 55 },
  { label: 'الوظيفة:', dots: 58 },
  { label: 'الرقم الوظيفي:', dots: 53 },
]

const options = ['١- عهدة', '٢- سلفة', '٣- تذاكر طيران', '٤- تذاكر نقل جماعي', '٥- راتب شهري']

const apps = [
  { name: 'Word', open: true, current: true },
  { name: 'Excel', open: true },
  { name: 'Attendance', open: true },
  { name: 'Firefox' },
  { name: 'Shutdown', open: true },
  { name: 'Calculator' },
  { name: 'Chrome', open: true },
  { name: 'Copilot' },
  { name: 'WhatsApp' },
  { name: 'Edge' },
  { name: 'AnyDesk' },
  { name: 'Task view' },
]
</script>

<style>
body {
  margin: 0;
}
</style>

<style scoped>
.app {
  position: relative;
  display: flex;
  flex-direction: column;
  height: 100vh;
  overflow: hidden;
  background: #fff;
  font-family: 'Open Sans', 'DejaVu Sans', sans-serif;
  font-size: 11px;
  line-height: 16px;
  color: #3b3b3b;
}

button {
  display: flex;
  align-items: center;
  justify-content: center;
  padding: 0;
  border: 0;
  background: none;
  font: inherit;
  color: inherit;
  white-space: nowrap;
}

svg {
  flex: none;
  display: block;
}

.serif,
.serif-plain {
  font-family: 'Liberation Serif', serif;
}

.serif {
  font-weight: bold;
}

.italic {
  font-style: italic;
}

.sans {
  font-family: 'Liberation Sans', sans-serif;
}

.sans-bold {
  font-family: 'Liberation Sans', sans-serif;
  font-weight: bold;
}

.arabic {
  font-family: 'DejaVu Sans', sans-serif;
}

.caret {
  display: inline-block;
  flex: none;
  border: 3px solid transparent;
  border-top-color: #666;
  border-bottom: 0;
}

/* Title bar */
.titlebar {
  display: flex;
  flex: none;
  height: 24px;
  background: linear-gradient(#2f6fd0, #2f6fd0) 43% 0 / 48px 1px no-repeat;
}

.quick {
  display: flex;
  align-items: center;
  width: 141px;
}

.quick .bar {
  width: 1px;
  height: 14px;
  margin: 0 1px;
  background: #aaa;
}

.caption {
  flex: 1;
  margin-top: 1px;
  padding-left: 8px;
  background: linear-gradient(#ff1f1f, #f40d0d 50%, #dd0000);
  color: #220000;
  font-size: 12px;
  line-height: 24px;
  text-align: center;
}

.window-buttons {
  display: flex;
  padding: 4px 2px 0 10px;
}

.window-buttons button {
  width: 46px;
  height: 20px;
}

/* Tabs */
.tabs {
  display: flex;
  flex: none;
  height: 24px;
  border-bottom: 1px solid #b6bbc1;
}

.file {
  width: 57px;
  height: 24px;
  margin-right: 3px;
  border: 1px solid #1c4f9f;
  border-bottom: 0;
  border-radius: 3px 3px 0 0;
  background: linear-gradient(#3d80d3, #2161b7 50%, #3a85da);
  color: #fff;
}

.tab {
  padding: 0 14px;
}

.tab.active {
  height: 25px;
  padding: 0 12px;
  border: 1px solid #b6bbc1;
  border-bottom: 0;
  border-radius: 3px 3px 0 0;
  background: #fff;
}

.tabs-end {
  display: flex;
  gap: 7px;
  margin-left: auto;
  padding-right: 2px;
}

/* Ribbon */
.ribbon {
  display: flex;
  flex: none;
  height: 85px;
  border-bottom: 2px solid #8e9399;
  background: linear-gradient(#fff, #fdfdfe 50%, #e6e9ed);
}

.group {
  display: flex;
  flex: none;
  flex-direction: column;
  box-sizing: border-box;
  border-right: 1px solid #b9bec5;
  box-shadow: 1px 0 0 #fff;
}

.clipboard {
  width: 151px;
}

.font {
  width: 269px;
}

.paragraph {
  width: 282px;
}

.styles {
  flex: 1;
}

.editing {
  width: 75px;
  margin-right: 12px;
}

.group-body {
  display: flex;
  flex: 1;
}

.group-label {
  display: flex;
  align-items: center;
  height: 16px;
  color: #6a7482;
}

.group-label span {
  flex: 1;
  text-align: center;
}

.group-label .launcher {
  margin: 2px 5px 0;
}

.paste {
  flex-direction: column;
  justify-content: flex-start;
  width: 48px;
  padding-top: 4px;
}

.paste span {
  margin: 2px 0 1px;
}

.stack {
  display: flex;
  flex-direction: column;
  padding-top: 2px;
}

.line {
  justify-content: flex-start;
  gap: 3px;
  height: 22px;
}

.line .caret {
  margin-left: 2px;
}

.clipboard .line {
  padding-left: 1px;
}

.dim {
  color: #959595;
}

.rows {
  flex-direction: column;
  gap: 5px;
  padding: 9px 0 0 5px;
}

.row {
  display: flex;
  height: 24px;
}

.on {
  border: 1px solid #c29434;
  border-radius: 3px;
  background: linear-gradient(#fbd774, #ffe57c);
}

.sep {
  width: 1px;
  margin: 0 4px 0 3px;
  background: linear-gradient(#fff, #c4c8ce, #fff);
}

.combo {
  display: flex;
  align-items: center;
  box-sizing: border-box;
  height: 22px;
  margin-top: 1px;
  border: 1px solid #c5c9cf;
  background: #fff;
}

.combo select {
  width: 100%;
  padding: 0 0 0 2px;
  border: 0;
  outline: 0;
  appearance: none;
  background: none;
  font: inherit;
  color: #111;
}

.combo .caret {
  margin: 0 4px 0 -10px;
}

.family {
  width: 98px;
}

.size {
  width: 43px;
  border-left: 0;
}

.gallery {
  display: flex;
  flex: 1;
  box-sizing: border-box;
  height: 60px;
  margin: 5px 0 0 6px;
  border: 1px solid #c5c9cf;
  background: #fff;
}

.style {
  flex-direction: column;
  justify-content: flex-start;
  box-sizing: border-box;
  width: 72px;
  height: 56px;
  margin-top: 1px;
  border: 3px solid transparent;
  border-radius: 2px;
}

.style.selected {
  border-color: #fbd66d;
  outline: 1px solid #c29434;
  outline-offset: -1px;
}

.preview {
  display: flex;
  align-items: center;
  align-self: flex-start;
  justify-content: flex-end;
  width: 54px;
  height: 32px;
  margin-left: 3px;
  overflow: hidden;
  color: #111;
}

.body {
  justify-content: center;
  font-family: Lato, sans-serif;
  font-size: 13px;
}

.heading1,
.heading2,
.title,
.subtitle {
  font-family: 'DejaVu Serif Condensed', 'DejaVu Serif', serif;
}

.heading1 {
  color: #365f9c;
  font-size: 16px;
  font-weight: bold;
}

.heading2 {
  color: #4f81bd;
  font-size: 14px;
  font-weight: bold;
}

.title {
  color: #17365d;
  font-size: 29px;
}

.subtitle {
  color: #4f81bd;
  font-size: 14px;
  font-style: italic;
}

.subtle {
  color: #808080;
  font-style: italic;
}

.emphasis {
  font-style: italic;
}

.gallery-scroll {
  display: flex;
  flex-direction: column;
  width: 13px;
  margin-left: auto;
  border-left: 1px solid #c5c9cf;
}

.gallery-scroll button {
  flex: 1;
  border-bottom: 1px solid #c5c9cf;
}

.gallery-scroll button:last-child {
  border-bottom: 0;
}

.off {
  background: #f3f4f6;
}

.change {
  flex-direction: column;
  justify-content: flex-start;
  width: 51px;
  padding-top: 5px;
  line-height: 13px;
}

.change svg {
  margin-bottom: 5px;
}

.editing .line {
  padding-left: 8px;
}

/* Document */
.workspace {
  display: flex;
  flex: 1;
  min-height: 0;
}

.canvas {
  position: relative;
  display: flex;
  flex: 1;
  justify-content: center;
  padding: 6px 0 0 6px;
  overflow: hidden;
  background: linear-gradient(#cbced3, #b7babf);
}

.page {
  box-sizing: border-box;
  width: 794px;
  height: 1123px;
  padding: 56px 120px 0;
  background: #fff;
  box-shadow: 0 0 8px #5d6166;
  color: #000;
  font-family: 'Liberation Sans', 'DejaVu Sans Condensed', 'DejaVu Sans', sans-serif;
  font-size: 14px;
  font-weight: bold;
  line-height: 38px;
}

.page h1,
.page p {
  height: 38px;
  margin: 0;
  font-size: inherit;
  white-space: nowrap;
}

.dots {
  font-size: 19px;
}

.option {
  display: flex;
  align-items: center;
  height: 41px;
}

.option input {
  box-sizing: border-box;
  width: 15px;
  height: 14px;
  margin: 0 4px 0 8px;
  border: 1px solid #000;
  border-right-width: 2px;
  appearance: none;
}

.activation {
  position: absolute;
  right: calc(50% + 404px);
  bottom: 18px;
  display: flex;
  flex-direction: column;
  color: #a5a7ab;
  font-size: 15px;
  line-height: 20px;
  white-space: nowrap;
}

.activation strong {
  font-size: 19px;
  font-weight: normal;
  line-height: 26px;
}

.scrollbar {
  display: flex;
  flex-direction: column;
  align-items: center;
  width: 18px;
  padding-top: 3px;
  background: #dcdfe3;
}

.ruler {
  border-bottom: 1px solid #b5b9bf;
}

.track {
  flex: 1;
  width: 16px;
  padding-top: 18px;
}

.thumb {
  display: flex;
  flex-direction: column;
  align-items: center;
  justify-content: center;
  gap: 1px;
  box-sizing: border-box;
  height: 61%;
  border: 1px solid #8d939b;
  border-radius: 2px;
  background: linear-gradient(90deg, #fdfdfd, #dfe2e6);
}

.thumb i {
  width: 8px;
  height: 1px;
  background: #8d939b;
}

.down {
  border-bottom: 1px solid #b5b9bf;
}

/* Status bar */
.status {
  display: flex;
  flex: none;
  align-items: center;
  box-sizing: border-box;
  height: 22px;
  border-top: 1px solid #8b9098;
  background: linear-gradient(#e6e8eb, #c3c7cc);
}

.cell {
  height: 20px;
  padding: 0 9px 0 8px;
  border-right: 1px solid #868c94;
}

.lang {
  gap: 16px;
}

.views {
  display: flex;
  margin-left: auto;
  padding-left: 4px;
  border-left: 1px solid #868c94;
}

.views button {
  width: 18px;
  height: 20px;
}

.percent {
  width: 46px;
}

.zoom {
  display: flex;
  align-items: center;
  padding-right: 4px;
}

.zoom input {
  width: 100px;
  height: 16px;
  margin: 0;
  appearance: none;
  background: linear-gradient(#7d838b, #7d838b) center / 100% 1px no-repeat;
}

.zoom input::-webkit-slider-thumb {
  width: 9px;
  height: 12px;
  appearance: none;
  border: 1px solid #666;
  border-radius: 1px 1px 5px 5px;
  background: #f5f6f7;
}

/* Taskbar */
.taskbar {
  display: flex;
  flex: none;
  justify-content: space-between;
  height: 40px;
  background: linear-gradient(90deg, #1e2f36, #20343b 60%, #2a3438);
  color: #fff;
}

.tray {
  display: flex;
  align-items: center;
  margin-left: 4px;
  border-left: 1px solid #6d777b;
}

.notify {
  width: 46px;
}

.clock {
  display: flex;
  flex-direction: column;
  align-items: center;
  width: 56px;
  line-height: 17px;
}

.ime {
  width: 34px;
  font-size: 13px;
}

.weather {
  gap: 8px;
  margin-left: 18px;
  font-size: 13px;
}

.apps {
  display: flex;
}

.app-btn {
  box-sizing: border-box;
  width: 49px;
  border-top: 2px solid transparent;
  border-bottom: 2px solid transparent;
}

.app-btn:last-of-type {
  margin-right: 0;
}

.app-btn.open {
  background: linear-gradient(#7db4ea, #7db4ea) bottom / 40px 2px no-repeat border-box;
}

.app-btn.current {
  border-bottom-color: #7db4ea;
  background: #4d5c65;
}

.search {
  display: flex;
  align-items: center;
  box-sizing: border-box;
  width: 287px;
  margin: 1px 0 0 2px;
  padding: 0 11px 0 1px;
  border: 1px solid #c8c8c8;
  background: #f2f2f2;
}

.search input {
  flex: 1;
  min-width: 0;
  padding: 0 10px 0 0;
  border: 0;
  outline: 0;
  background: none;
  color: #333;
  font-family: 'DejaVu Sans', sans-serif;
  font-size: 15px;
}

.search input::placeholder {
  color: #444;
  opacity: 1;
}

.start {
  width: 49px;
}

/* Watermark laid over the lower edge of the window */
.brand {
  position: absolute;
  bottom: 20px;
  left: 50%;
  display: flex;
  flex-direction: column;
  align-items: center;
  width: 174px;
  margin-left: -87px;
  color: rgba(160, 166, 172, 0.3);
  font-family: 'Liberation Sans', 'DejaVu Sans', sans-serif;
  font-weight: bold;
  pointer-events: none;
}

.brand-ar {
  font-size: 50px;
  line-height: 54px;
}

.brand-en {
  color: rgba(150, 158, 164, 0.55);
  font-size: 28px;
  line-height: 28px;
}
</style>
